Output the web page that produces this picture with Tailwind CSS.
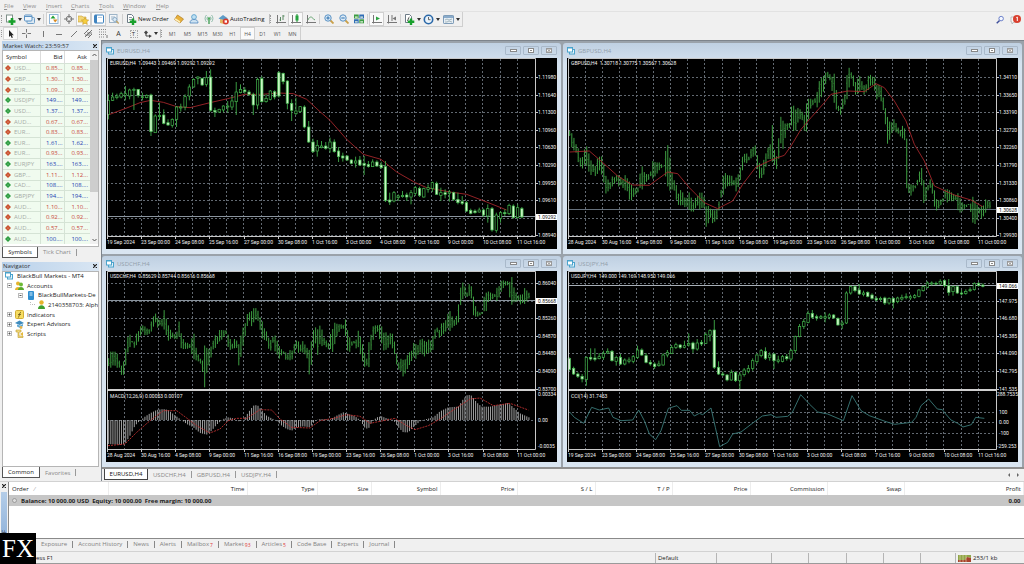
<!DOCTYPE html>
<html lang="en">
<head>
<meta charset="utf-8">
<title>MetaTrader 4</title>
<script src="https://cdn.jsdelivr.net/npm/@tailwindcss/browser@4"></script>
</head>
<body class="relative flex h-screen flex-col overflow-hidden bg-[#f0f0f0] font-['Open_Sans','Noto_Sans',sans-serif] text-[6px] leading-[8px] text-[#222]">

<nav aria-label="Menu" class="flex h-[12px] shrink-0 items-center border-b border-[#e2e2e2] pl-[4px] text-[#8f8f8f]">
  <button class="w-[19px] text-left"><u>F</u>ile</button>
  <button class="w-[23px] text-left"><u>V</u>iew</button>
  <button class="w-[25px] text-left"><u>I</u>nsert</button>
  <button class="w-[28px] text-left"><u>C</u>harts</button>
  <button class="w-[24px] text-left"><u>T</u>ools</button>
  <button class="w-[33px] text-left"><u>W</u>indow</button>
  <button class="text-left"><u>H</u>elp</button>
</nav>

<div role="toolbar" aria-label="Standard" class="flex h-[15px] shrink-0 items-stretch">
  <div class="flex items-stretch border-r border-b border-[#cfcfcf] pl-px">
    <span class="my-[3px] mr-px w-[2px] border-l border-dotted border-[#999]"></span>
    <button aria-label="New chart" class="flex w-[19px] items-center gap-[2px] pl-px"><svg class="size-[11px]" viewBox="0 0 11 11"><rect x="1.500" y="1" width="6" height="7" fill="#fff" stroke="#7d8f88"/><path d="M7 4v7M3.500 7.500h7" stroke="#18a02c" stroke-width="2.600"/></svg><svg class="w-[4px]" viewBox="0 0 4 3"><path d="M0 0h4L2 3z" fill="#333"/></svg></button>
    <button aria-label="Profiles" class="flex w-[20px] items-center gap-[2px] pl-px"><svg class="size-[11px]" viewBox="0 0 11 11"><rect x="3" y="3.500" width="7.500" height="6" rx="1" fill="#dbe8f3" stroke="#6f9fc8"/><rect x=".5" y="1" width="7.500" height="6" rx="1" fill="#eef5fb" stroke="#5d93c4"/><path d="M1 2.500h7" stroke="#5d93c4"/></svg><svg class="w-[4px]" viewBox="0 0 4 3"><path d="M0 0h4L2 3z" fill="#333"/></svg></button>
    <span class="my-[2px] mr-[2px] w-px bg-[#cfcfcf]"></span>
    <button aria-label="Market Watch" aria-pressed="true" class="flex w-[15px] items-center justify-center border border-[#d0d0d0] bg-[#fafafa]"><svg class="size-[10px]" viewBox="0 0 10 10"><rect x=".5" y=".5" width="8.500" height="9" fill="#fdfdfd" stroke="#8fb5d6"/><path d="M1.500 4.500L4 1.500l2.500 3z" fill="#22a033"/><path d="M4 5.500h4.500L6.200 8.500z" fill="#d98a20"/></svg></button>
    <button aria-label="Data Window" class="flex w-[15px] items-center justify-center"><svg class="size-[10px]" viewBox="0 0 10 10"><circle cx="5" cy="5" r="2.800" fill="none" stroke="#777"/><path d="M5 0v4M5 6v4M0 5h4M6 5h4" stroke="#777"/></svg></button>
    <button aria-label="Navigator" aria-pressed="true" class="flex w-[15px] items-center justify-center border border-[#d0d0d0] bg-[#fafafa]"><svg class="size-[11px]" viewBox="0 0 11 11"><path d="M0 2h4l1 1h3v5H0z" fill="#f3d676" stroke="#c9a13a" stroke-width=".6"/><path d="M7 3.500l1.200 2.300 2.500.3-1.900 1.700.5 2.600L7 9.200l-2.300 1.200.5-2.600-1.900-1.700 2.500-.3z" fill="#f7cf3d" stroke="#c6992b" stroke-width=".6"/></svg></button>
    <button aria-label="Terminal" aria-pressed="true" class="flex w-[15px] items-center justify-center border border-[#d0d0d0] bg-[#fafafa]"><svg class="size-[10px]" viewBox="0 0 10 10"><rect x=".5" y="1" width="9" height="8" rx=".6" fill="#fff" stroke="#3f83bf"/><path d="M2 1v8" stroke="#3f83bf" stroke-width="2"/><path d="M4 3.500h4" stroke="#b9cfe2"/></svg></button>
    <button aria-label="Strategy Tester" class="flex w-[15px] items-center justify-center"><svg class="size-[10px]" viewBox="0 0 10 10"><rect x=".5" y=".5" width="7.500" height="8" fill="#f3f6f9" stroke="#9eb4c7"/><path d="M2 3h4M2 5h2" stroke="#9eb4c7"/><circle cx="5.800" cy="5.500" r="2" fill="#dcebf6" stroke="#8aa9c4"/><path d="M7.300 7l2.400 2.500" stroke="#c0a265" stroke-width="1.300"/></svg></button>
    <span class="my-[2px] mx-px w-px bg-[#cfcfcf]"></span>
    <button class="flex w-[47px] items-center gap-px pl-[2px] text-[#111]"><svg class="size-[11px] shrink-0" viewBox="0 0 11 11"><path d="M1.500.5h4l2 2v6h-6z" fill="#fff" stroke="#6d7b86"/><path d="M3 3.500h3M3 5.500h3" stroke="#8d9aa4"/><path d="M7 4.500V11M3.800 7.700h6.500" stroke="#18a02c" stroke-width="2.400"/></svg><span class="whitespace-nowrap">New Order</span></button>
    <button aria-label="MetaEditor" class="flex w-[15px] items-center justify-center"><svg class="size-[10px]" viewBox="0 0 10 10"><path d="M3.500 1l6 4L6 9 .5 5.500z" fill="#e8b13c" stroke="#b07b1c" stroke-width=".7"/><path d="M.5 5.500L6 9l.2-1.800L1.500 4.300z" fill="#fff0bd"/></svg></button>
    <button aria-label="Community" class="flex w-[15px] items-center justify-center"><svg class="size-[10px]" viewBox="0 0 10 10"><circle cx="5" cy="3" r="2.400" fill="#bfe0f3" stroke="#4e9ac9" stroke-width=".8"/><path d="M1 9c0-2.500 1.500-3.500 4-3.500S9 6.500 9 9z" fill="#cfe4f3" stroke="#4e87bd" stroke-width=".8"/></svg></button>
    <button aria-label="Signals" class="flex w-[15px] items-center justify-center"><svg class="size-[10px]" viewBox="0 0 10 10"><g fill="none" stroke="#83b6a2" stroke-width=".9"><path d="M2.500 1a5 5 0 000 7M7.500 1a5 5 0 010 7"/><path d="M3.600 2.700a3 3 0 000 3.600M6.400 2.700a3 3 0 010 3.600"/></g><circle cx="5" cy="4.500" r="1.300" fill="#4fa95f"/><path d="M5 5.500V10" stroke="#3a9a4c" stroke-width="1.300"/></svg></button>
    <button class="flex w-[50px] items-center gap-px pl-[2px] text-[#111]"><svg class="size-[11px] shrink-0" viewBox="0 0 11 11"><path d="M.5 4.500L5 1l5 3.500-4.500 2z" fill="#5e9cc7"/><path d="M2 5v4l4 1V6z" fill="#e5b765"/><circle cx="7.800" cy="7.500" r="3" fill="#d8392b"/><rect x="6.600" y="6.300" width="2.400" height="2.400" fill="#fff"/></svg><span>AutoTrading</span></button>
    <span class="my-[2px] ml-[3px] w-px bg-[#bdbdbd]"></span>
    <span class="my-[3px] mr-px w-[2px] border-l border-dotted border-[#999]"></span>
    <button aria-label="Bar chart" class="flex w-[15px] items-center justify-center"><svg class="size-[10px]" viewBox="0 0 10 10" fill="none"><path d="M1.500 1v8.500M0 8.500h10" stroke="#777"/><path d="M4.500 3v4M3.500 6h1M7 1v5M7 2h1.500" stroke="#5b8a63"/></svg></button>
    <button aria-label="Candlesticks" aria-pressed="true" class="flex w-[15px] items-center justify-center border border-[#d0d0d0] bg-[#fafafa]"><svg class="size-[10px]" viewBox="0 0 10 10"><path d="M1.500 1v8.500M0 8.500h10" stroke="#777"/><path d="M6 0v8" stroke="#1d8c33"/><rect x="4.500" y="1.500" width="3" height="5" fill="#26a33e"/></svg></button>
    <button aria-label="Line chart" class="flex w-[15px] items-center justify-center"><svg class="size-[10px]" viewBox="0 0 10 10" fill="none"><path d="M1.500 1v8.500M0 8.500h10" stroke="#777"/><path d="M2 6c1-3 3-3.500 4-2.500S8 5.500 9 6" stroke="#67a572"/></svg></button>
    <span class="my-[2px] mx-px w-px bg-[#cfcfcf]"></span>
    <button aria-label="Zoom in" class="flex w-[15px] items-center justify-center"><svg class="size-[10px]" viewBox="0 0 10 10"><path d="M6 6l3.500 3.500" stroke="#c9a04a" stroke-width="1.800"/><circle cx="4" cy="4" r="3.200" fill="#dcebf8" stroke="#5a92c4"/><path d="M4 2.300v3.400M2.300 4h3.400" stroke="#2d70ad"/></svg></button>
    <button aria-label="Zoom out" class="flex w-[15px] items-center justify-center"><svg class="size-[10px]" viewBox="0 0 10 10"><path d="M6 6l3.500 3.500" stroke="#c9a04a" stroke-width="1.800"/><circle cx="4" cy="4" r="3.200" fill="#dcebf8" stroke="#5a92c4"/><path d="M2.300 4h3.400" stroke="#2d70ad"/></svg></button>
    <button aria-label="Tile windows" class="flex w-[15px] items-center justify-center"><svg class="size-[10px]" viewBox="0 0 10 10"><path d="M0 .5h4.700v4H0z" fill="#3c9d43"/><path d="M5.300.5H10v4H5.300zM0 5.300h4.700v4H0z" fill="#2f6db5"/><path d="M5.300 5.300H10v4H5.300z" fill="#3c9d43"/><path d="M1 2.500h2.700v1.300H1zM6.300 2.500H9v1.300H6.300zM1 7.200h2.700v1.300H1zM6.300 7.200H9v1.300H6.300z" fill="#e9f3e2"/></svg></button>
    <span class="my-[2px] mx-px w-px bg-[#cfcfcf]"></span>
    <button aria-label="Auto scroll" aria-pressed="true" class="flex w-[15px] items-center justify-center border border-[#d0d0d0] bg-[#fafafa]"><svg class="size-[10px]" viewBox="0 0 10 10"><path d="M1.500 1v8.500M0 8.500h10" stroke="#777"/><path d="M4 2.500v4L8 4.500z" fill="#2ba340"/></svg></button>
    <button aria-label="Chart shift" class="flex w-[15px] items-center justify-center"><svg class="size-[10px]" viewBox="0 0 10 10"><path d="M1.500 1v8.500M0 8.500h10M5 1v6" stroke="#777"/><path d="M9 2.500v4L5.500 4.500z" fill="#777"/></svg></button>
    <span class="my-[2px] mx-px w-px bg-[#cfcfcf]"></span>
    <button aria-label="Indicators" class="flex w-[20px] items-center gap-[2px] pl-[2px]"><svg class="size-[11px]" viewBox="0 0 11 11"><path d="M1.500.5h4l2 2v6h-6z" fill="#fff" stroke="#6d7b86"/><path d="M3 7c1.500 0 1-4 2.500-4" fill="none" stroke="#555"/><path d="M7 4.500V11M3.800 7.700h6.500" stroke="#18a02c" stroke-width="2.400"/></svg><svg class="w-[4px]" viewBox="0 0 4 3"><path d="M0 0h4L2 3z" fill="#333"/></svg></button>
    <button aria-label="Periods" class="flex w-[20px] items-center gap-[2px] pl-px"><svg class="size-[11px]" viewBox="0 0 11 11"><circle cx="5.500" cy="5.500" r="4.200" fill="#eaf3fb" stroke="#2a68a8" stroke-width="1.600"/><path d="M5.500 3v2.700h2" fill="none" stroke="#444" stroke-width=".8"/></svg><svg class="w-[4px]" viewBox="0 0 4 3"><path d="M0 0h4L2 3z" fill="#333"/></svg></button>
    <button aria-label="Templates" class="flex w-[20px] items-center gap-[2px] pl-px"><svg class="size-[11px]" viewBox="0 0 11 11"><rect x=".5" y="1.500" width="10" height="8" rx=".6" fill="#e6eef5" stroke="#7e9cb8"/><path d="M.5 3h10" stroke="#6b94bb" stroke-width="1.500"/><path d="M2 6l2-1 2 1 3-1M2 8h2l2-1 3 1" fill="none" stroke="#8aa0a8" stroke-width=".7"/></svg><svg class="w-[4px]" viewBox="0 0 4 3"><path d="M0 0h4L2 3z" fill="#333"/></svg></button>
  </div>
  <div class="ml-auto flex items-center gap-[5px] pr-[3px]">
    <button aria-label="Search"><svg class="size-[9px]" viewBox="0 0 10 10"><path d="M4 6L.8 9.300" stroke="#3e4e9a" stroke-width="1.600"/><circle cx="5.700" cy="4" r="2.500" fill="#f3f7ff" stroke="#5d74c4"/></svg></button>
    <button aria-label="Notifications"><svg class="size-[11px]" viewBox="0 0 11 11"><path d="M1 3h6v5H4L2 10V8H1z" fill="#f7f7f7" stroke="#aaa" stroke-width=".7"/><circle cx="7" cy="5" r="4" fill="#d9402f"/><path d="M6.300 3.500L7.300 3v4" fill="none" stroke="#fff"/></svg></button>
  </div>
</div>

<div role="toolbar" aria-label="Line studies and periods" class="flex h-[13px] shrink-0 items-stretch">
  <div class="flex items-stretch border-r border-[#cfcfcf] pl-px text-[5px] text-[#555]">
    <span class="my-[3px] w-[2px] border-l border-dotted border-[#999]"></span>
    <button aria-label="Cursor" aria-pressed="true" class="flex w-[15px] items-center justify-center border border-[#d8d8d8] bg-[#fafafa]"><svg class="size-[8px]" viewBox="0 0 8 8"><path d="M2 0v7l1.600-1.400L4.700 8l1.200-.6-1.100-2.200h2z" fill="#222"/></svg></button>
    <button aria-label="Crosshair" class="flex w-[16px] items-center justify-center"><svg class="size-[9px]" viewBox="0 0 9 9"><path d="M4.500 0v3.500M4.500 5.500V9M0 4.500h3.500M5.500 4.500H9" stroke="#777"/></svg></button>
    <button aria-label="Vertical line" class="ml-px flex w-[16px] items-center justify-center"><svg class="size-[8px]" viewBox="0 0 8 8"><path d="M4.500 1v6" stroke="#777"/></svg></button>
    <button aria-label="Horizontal line" class="flex w-[15px] items-center justify-center"><svg class="size-[8px]" viewBox="0 0 8 8"><path d="M1 4.500h6" stroke="#777"/></svg></button>
    <button aria-label="Trendline" class="flex w-[15px] items-center justify-center"><svg class="size-[8px]" viewBox="0 0 8 8"><path d="M1 7l6-6" stroke="#777"/></svg></button>
    <button aria-label="Equidistant channel" class="flex w-[15px] items-center justify-center"><svg class="size-[9px]" viewBox="0 0 9 9"><path d="M0 5l5-5M1 8l7-7M4 9l4-4M1 6h5M3 4h5" stroke="#555" stroke-width=".8"/></svg></button>
    <button aria-label="Fibonacci" class="flex w-[15px] items-center justify-center"><svg class="size-[9px]" viewBox="0 0 9 9"><path d="M0 .5h8M0 3h8M0 5.500h8M0 8h6" stroke="#888" stroke-dasharray="1 1"/><path d="M8 6v3" stroke="#777"/></svg></button>
    <button aria-label="Text" class="w-[15px] text-center text-[7px] text-[#333]">A</button>
    <button aria-label="Text label" class="flex w-[15px] items-center justify-center"><span class="flex size-[8px] items-center justify-center border border-dotted border-[#aaa] text-[6px] text-[#333]">T</span></button>
    <button aria-label="Arrows" class="flex w-[17px] items-center gap-[2px] pl-[3px]"><svg class="size-[8px]" viewBox="0 0 8 8"><path d="M0 2.500L2 .5l2 2-2 2z" fill="#444"/><path d="M2 3v3h4" fill="none" stroke="#444"/><path d="M5 4.500L7.800 6 5 8z" fill="#444"/></svg><svg class="w-[4px]" viewBox="0 0 4 3"><path d="M0 0h4L2 3z" fill="#333"/></svg></button>
    <span class="my-[2px] ml-[2px] w-px bg-[#bdbdbd]"></span>
    <span class="my-[3px] mr-[2px] w-[2px] border-l border-dotted border-[#999]"></span>
    <button class="w-[15px]">M1</button><button class="w-[15px]">M5</button><button class="w-[15px]">M15</button><button class="w-[15px]">M30</button><button class="w-[15px]">H1</button><button aria-pressed="true" class="w-[15px] border border-[#d0d0d0] bg-[#fafafa]">H4</button><button class="w-[15px]">D1</button><button class="w-[15px]">W1</button><button class="w-[15px]">MN</button>
  </div>
</div>

<div class="flex min-h-0 flex-1">
  <aside class="flex w-[99px] shrink-0 flex-col gap-[4px] pl-[2px] pt-px pb-[3px]">
    <section class="flex min-h-0 flex-1 flex-col" aria-label="Market Watch">
      <h2 class="flex h-[9px] shrink-0 items-center justify-between bg-linear-to-r from-[#b9d1ea] to-[#d9e6f3] pl-px pr-[2px] text-[#333]">Market Watch: 23:59:57<button aria-label="Close Market Watch"><svg class="size-[4px]" viewBox="0 0 4 4"><path d="M0 0l4 4M4 0L0 4" stroke="#222" stroke-width="1.200"/></svg></button></h2>
      <div class="flex min-h-0 flex-1 border border-[#b5b5b5] bg-white pb-[2px]">
        <table class="h-full flex-1 border-collapse bg-[#f0fbef]">
          <colgroup><col><col class="w-[24px]"><col class="w-[26px]"></colgroup>
          <thead><tr class="h-[12px] bg-white"><th class="pl-[3px] text-left font-normal">Symbol</th><th class="border-l border-[#dcdcdc] pr-px text-right font-normal">Bid</th><th class="border-l border-[#dcdcdc] pr-[3px] text-right font-normal">Ask</th></tr></thead>
          <tbody id="quotes"></tbody>
        </table>
        <div class="flex w-[8px] shrink-0 flex-col items-center bg-[#f0f0f0] py-[2px]">
          <svg class="w-[5px]" viewBox="0 0 5 4"><path d="M.5 3L2.500 1l2 2" fill="none" stroke="#555"/></svg>
          <div class="mt-[3px] h-[132px] w-full bg-[#cdcdcd]"></div>
          <svg class="mt-auto w-[5px]" viewBox="0 0 5 4"><path d="M.5 1l2 2 2-2" fill="none" stroke="#555"/></svg>
        </div>
      </div>
      <div role="tablist" class="flex h-[11px] shrink-0 text-[#888]">
        <button role="tab" aria-selected="true" class="w-[36px] border border-t-0 border-[#555] bg-white text-[#222]">Symbols</button>
        <button role="tab" class="ml-[5px]">Tick Chart</button><span class="ml-[5px] my-[2px] w-px bg-[#999]"></span>
      </div>
    </section>
    <section class="flex min-h-0 flex-1 flex-col" aria-label="Navigator">
      <h2 class="flex h-[9px] shrink-0 items-center justify-between bg-linear-to-r from-[#b9d1ea] to-[#d9e6f3] pl-px pr-[2px] text-[#333]">Navigator<button aria-label="Close Navigator"><svg class="size-[4px]" viewBox="0 0 4 4"><path d="M0 0l4 4M4 0L0 4" stroke="#222" stroke-width="1.200"/></svg></button></h2>
      <div class="min-h-0 flex-1 overflow-hidden border border-[#b5b5b5] bg-white">
        <ul class="grid h-[67px] grid-rows-7 whitespace-nowrap">
          <li class="flex items-center gap-[4px] pl-[2px]"><svg class="size-[8px] shrink-0" viewBox="0 0 8 8"><rect x="2.500" y="2.500" width="5" height="4.500" fill="#e5f4fb" stroke="#4aa3cc"/><rect x=".5" y=".5" width="5" height="4.500" fill="#fff" stroke="#4aa3cc"/><path d="M.5 1h5" stroke="#4aa3cc"/></svg>BlackBull Markets - MT4</li>
          <li class="flex items-center gap-[3px] pl-[4px]"><svg class="size-[5px] shrink-0" viewBox="0 0 5 5"><rect x=".5" y=".5" width="4" height="4" fill="#fff" stroke="#bbb"/><path d="M1.500 2.500h2" stroke="#555"/></svg><svg class="size-[9px] shrink-0" viewBox="0 0 9 9"><circle cx="3" cy="2.500" r="2" fill="#e6b32c"/><path d="M0 9c0-4 6-4 6 0z" fill="#e6b32c"/><circle cx="6" cy="3.500" r="2" fill="#6cba35"/><path d="M3 9c0-4 6-4 6 0z" fill="#56a82c"/></svg>Accounts</li>
          <li class="flex items-center gap-[3px] pl-[15px]"><svg class="size-[5px] shrink-0" viewBox="0 0 5 5"><rect x=".5" y=".5" width="4" height="4" fill="#fff" stroke="#bbb"/><path d="M1.500 2.500h2" stroke="#555"/></svg><svg class="size-[9px] shrink-0" viewBox="0 0 9 9"><rect x="2" width="6" height="9" rx="1" fill="#2f8fd0"/><path d="M3.500 2h3M3.500 4h3" stroke="#d5ecfa"/></svg>BlackBullMarkets-De</li>
          <li class="flex items-center gap-[2px] pl-[27px]"><svg class="h-[5px] w-[5px] shrink-0" viewBox="0 0 5 5"><path d="M.5 0v2.500H5" fill="none" stroke="#bbb" stroke-dasharray="1 1"/></svg><svg class="size-[9px] shrink-0" viewBox="0 0 9 9"><circle cx="4.500" cy="2.500" r="2.200" fill="#e6b32c"/><path d="M1 9c0-5 7-5 7 0z" fill="#3f9f2e"/></svg>2140358703: Alph</li>
          <li class="flex items-center gap-[3px] pl-[4px]"><svg class="size-[5px] shrink-0" viewBox="0 0 5 5"><rect x=".5" y=".5" width="4" height="4" fill="#fff" stroke="#bbb"/><path d="M1.500 2.500h2M2.500 1.500v2" stroke="#555"/></svg><svg class="size-[9px] shrink-0" viewBox="0 0 9 9"><rect x=".5" y=".5" width="8" height="8" rx="1" fill="#f6dc62" stroke="#d2ae35"/><path d="M3 7.500c1.800 0 1-5.500 3-5.500M3 4.500h3" fill="none" stroke="#6b5415" stroke-width=".8"/></svg>Indicators</li>
          <li class="flex items-center gap-[3px] pl-[4px]"><svg class="size-[5px] shrink-0" viewBox="0 0 5 5"><rect x=".5" y=".5" width="4" height="4" fill="#fff" stroke="#bbb"/><path d="M1.500 2.500h2M2.500 1.500v2" stroke="#555"/></svg><svg class="size-[9px] shrink-0" viewBox="0 0 9 9"><path d="M0 3l4.500-2.500L9 3 4.500 5z" fill="#3e8bbd"/><path d="M2 4.500v2l3 1.500 3-2V4L5 5.500z" fill="#61a9d5"/><circle cx="6" cy="7.500" r="1.400" fill="#e6b34a"/></svg>Expert Advisors</li>
          <li class="flex items-center gap-[3px] pl-[4px]"><svg class="size-[5px] shrink-0" viewBox="0 0 5 5"><rect x=".5" y=".5" width="4" height="4" fill="#fff" stroke="#bbb"/><path d="M1.500 2.500h2M2.500 1.500v2" stroke="#555"/></svg><svg class="size-[9px] shrink-0" viewBox="0 0 9 9"><path d="M1 1h5v2H4v4h4v1.500H3V3H1z" fill="#f4dd7e" stroke="#bf9a2b" stroke-width=".6"/><path d="M5 5l3-2v4z" fill="#e5b83a"/></svg>Scripts</li>
        </ul>
      </div>
      <div role="tablist" class="flex h-[11px] shrink-0 text-[#888]">
        <button role="tab" aria-selected="true" class="w-[38px] border border-t-0 border-[#555] bg-white text-[#222]">Common</button>
        <button role="tab" class="ml-[5px]">Favorites</button><span class="ml-[5px] my-[2px] w-px bg-[#999]"></span>
      </div>
    </section>
  </aside>

  <main class="ml-[2px] flex min-w-0 flex-1 flex-col border-t border-l border-[#7d848c]">
    <div id="desk" class="grid min-h-0 flex-1 grid-cols-2 grid-rows-2 gap-[2px] border-b-2 border-[#8f8f8f] bg-[#9aa2aa] pt-[2px] pr-[2px]"></div>
    <div role="tablist" aria-label="Charts" class="flex h-[12px] shrink-0 items-stretch pl-[2px] pb-px text-[#888]">
      <button role="tab" aria-selected="true" class="w-[44px] border border-t-0 border-[#444] bg-white text-[#111]">EURUSD,H4</button>
      <button role="tab" class="ml-[5px]">USDCHF,H4</button><span class="mx-[5px] my-[2px] w-px bg-[#999]"></span>
      <button role="tab">GBPUSD,H4</button><span class="mx-[5px] my-[2px] w-px bg-[#999]"></span>
      <button role="tab">USDJPY,H4</button><span class="mx-[5px] my-[2px] w-px bg-[#999]"></span>
      <div class="ml-auto flex items-center gap-[7px] pr-[5px]">
        <button aria-label="Scroll left"><svg class="h-[4px] w-[2px]" viewBox="0 0 2 4"><path d="M2 0v4L0 2z" fill="#666"/></svg></button>
        <button aria-label="Scroll right"><svg class="h-[4px] w-[2px]" viewBox="0 0 2 4"><path d="M0 0v4l2-2z" fill="#666"/></svg></button>
      </div>
    </div>
  </main>
</div>

<section aria-label="Terminal" class="flex h-[58px] shrink-0 border-t border-[#d2d2d2]">
  <div class="flex w-[8px] shrink-0 flex-col items-center gap-[4px] overflow-hidden pt-[2px]">
    <button aria-label="Close Terminal"><svg class="block size-[4px]" viewBox="0 0 4 4"><path d="M0 0l4 4M4 0L0 4" stroke="#222" stroke-width="1.200"/></svg></button>
    <span class="flex w-[6px] flex-1 rotate-180 items-center bg-linear-to-t from-[#b4cde8] to-[#8fb2da] pt-[6px] leading-[6px] [writing-mode:vertical-rl]">F</span>
  </div>
  <div class="min-w-0 flex-1 border-b border-l border-[#8a8a8a] bg-white">
    <table class="w-full table-fixed border-collapse">
      <colgroup><col class="w-[99px]"><col class="w-[139px]"><col class="w-[70px]"><col class="w-[54px]"><col class="w-[69px]"><col class="w-[77px]"><col class="w-[78px]"><col class="w-[77px]"><col class="w-[78px]"><col class="w-[77px]"><col class="w-[77px]"><col></colgroup>
      <thead><tr class="h-[13px] text-right *:border-r *:border-[#ededed] *:pr-[2px] *:font-normal">
        <th class="pl-[3px] text-left">Order <span class="pl-[4px] text-[#999]">⁄</span></th><th>Time</th><th>Type</th><th>Size</th><th>Symbol</th><th>Price</th><th>S / L</th><th>T / P</th><th>Price</th><th>Commission</th><th>Swap</th><th>Profit</th></tr></thead>
      <tbody><tr class="h-[11px] bg-[#c6c6c6] font-bold">
        <td colspan="11" class="py-0 pl-[3px]"><div class="flex items-center gap-[4px] whitespace-pre"><svg class="size-[5px]" viewBox="0 0 5 5"><circle cx="2.500" cy="2.500" r="2" fill="#ddd" stroke="#888" stroke-width=".7"/></svg>Balance: 10 000.00 USD  Equity: 10 000.00  Free margin: 10 000.00</div></td>
        <td class="py-0 pr-[3px] text-right">0.00</td></tr></tbody>
    </table>
  </div>
</section>
<div role="tablist" aria-label="Terminal tabs" class="flex h-[13px] shrink-0 items-center border-b border-[#d2d2d2] pb-[2px] pl-[41px] text-[#808080]">
  <button role="tab">Exposure</button><span class="mx-[5px] h-[7px] w-px bg-[#888]"></span>
  <button role="tab">Account History</button><span class="mx-[5px] h-[7px] w-px bg-[#888]"></span>
  <button role="tab">News</button><span class="mx-[5px] h-[7px] w-px bg-[#888]"></span>
  <button role="tab">Alerts</button><span class="mx-[5px] h-[7px] w-px bg-[#888]"></span>
  <button role="tab">Mailbox<sub class="pl-px text-[5px] text-[#d33]">7</sub></button><span class="mx-[5px] h-[7px] w-px bg-[#888]"></span>
  <button role="tab">Market<sub class="pl-px text-[5px] text-[#d33]">93</sub></button><span class="mx-[5px] h-[7px] w-px bg-[#888]"></span>
  <button role="tab">Articles<sub class="pl-px text-[5px] text-[#d33]">5</sub></button><span class="mx-[5px] h-[7px] w-px bg-[#888]"></span>
  <button role="tab">Code Base</button><span class="mx-[5px] h-[7px] w-px bg-[#888]"></span>
  <button role="tab">Experts</button><span class="mx-[5px] h-[7px] w-px bg-[#888]"></span>
  <button role="tab">Journal</button><span class="mx-[5px] h-[7px] w-px bg-[#888]"></span>
</div>
<footer class="flex h-[12px] shrink-0 items-stretch border-b border-[#9a9a9a] pt-px leading-[11px]">
  <span class="min-w-0 flex-1 pl-[36px]">ess F1</span>
  <span class="w-[61px] border-l border-[#b5b5b5] pl-[2px]">Default</span>
  <span class="w-[55px] border-l border-[#b5b5b5]"></span>
  <span class="w-[37px] border-l border-[#b5b5b5]"></span>
  <span class="w-[38px] border-l border-[#b5b5b5]"></span>
  <span class="w-[37px] border-l border-[#b5b5b5]"></span>
  <span class="w-[37px] border-l border-[#b5b5b5]"></span>
  <span class="w-[35px] border-l border-[#b5b5b5]"></span>
  <span class="flex w-[69px] items-center gap-[2px] border-l border-[#b5b5b5] pl-[2px]"><svg class="h-[7px] w-[13px]" viewBox="0 0 13 7"><path d="M0 0h13v3L9 2 7 5H0z" fill="#8fa548"/><path d="M0 5h7l2-3 4 1v4H0z" fill="#a8402c"/><path d="M2 0v7M5 0v7M8 0v7" stroke="#e6dcb0" stroke-width=".6"/></svg>253/1 kb</span>
</footer>
<div class="absolute bottom-0 left-0 flex h-[31px] w-[36px] items-center justify-center bg-black font-['Liberation_Serif',serif] text-[25px] leading-[31px] text-white">FX</div>

<script>
// ---- Market Watch quotes: symbol, bid, ask, direction ----
const quotes = `USD...|0.85...|0.85...|d
GBP...|1.30...|1.30...|d
EUR...|1.09...|1.09...|d
USDJPY|149....|149....|u
USD...|1.37...|1.37...|u
AUD...|0.67...|0.67...|d
EUR...|0.83...|0.83...|d
EUR...|1.61...|1.62...|u
EUR...|0.93...|0.93...|d
EURJPY|163....|163....|u
GBP...|1.11...|1.12...|d
CAD...|108....|108....|u
GBPJPY|194....|194....|u
AUD...|1.10...|1.10...|d
AUD...|0.92...|0.92...|d
AUD...|0.57...|0.57...|d
AUD...|100....|100....|u`.split('\n').map(r => r.split('|'));
document.getElementById('quotes').innerHTML = quotes.map(([s, b, a, d]) => {
  const tone = d === 'd' ? 'text-[#c8483a]' : 'text-[#2340b0]';
  const fill = d === 'd' ? '#c9502e' : '#2c9c40';
  return `<tr class="border-t border-[#d5e3d5]"><td class="py-0 pl-[2px]"><div class="flex items-center gap-[3px] text-[#a5aaa5]"><svg class="size-[6px]" viewBox="0 0 6 6"><path d="M3 0l3 3-3 3-3-3z" fill="${fill}"/><circle cx="3" cy="3" r=".6" fill="#fff" opacity=".6"/></svg>${s}</div></td><td class="border-l border-[#d5e3d5] py-0 pr-px text-right ${tone}">${b}</td><td class="border-l border-[#d5e3d5] py-0 pr-[2px] text-right ${tone}">${a}</td></tr>`;
}).join('');

// ---- Chart windows ----
// Series are kept in units of a third of a pixel; X and Y bring them into the view box.
const X = v => +(v / 3 - 6).toFixed(2), Y = v => +(v / 3 - 17).toFixed(2);
const pairs = s => s.trim().split(/\s+/).map(p => p.split(',').map(Number));
const short = ['19 Sep 2024','23 Sep 00:00','24 Sep 08:00','25 Sep 16:00','27 Sep 00:00','30 Sep 08:00','1 Oct 16:00','3 Oct 00:00','4 Oct 08:00','7 Oct 16:00','9 Oct 00:00','10 Oct 08:00','11 Oct 16:00'];
const long = ['28 Aug 2024','30 Aug 16:00','4 Sep 08:00','9 Sep 00:00','11 Sep 16:00','16 Sep 08:00','19 Sep 00:00','23 Sep 16:00','26 Sep 08:00','1 Oct 00:00','3 Oct 16:00','8 Oct 08:00','11 Oct 00:00'];

// top, bottom, high, low, filled (1) or hollow (0)
const eur = `178,220,160,235,0 168,178,155,180,0 165,170,158,175,0 158,168,152,172,0 158,163,135,178,0 147,165,143,175,0 145,148,140,207,0 145,163,145,170,1 167,170,155,178,0 163,170,160,172,0 162,272,158,285,1 225,275,220,275,0 223,227,185,237,0 222,247,205,250,1 245,252,235,255,1 235,253,232,260,0 198,235,195,258,0 198,201,188,212,0 167,198,160,208,0 138,165,130,178,0 115,138,112,140,0 108,112,106,130,0 112,132,110,135,1 110,130,90,137,0 108,208,85,212,1 208,213,200,228,1 205,213,203,216,0 195,207,193,214,0 195,198,180,215,0 180,198,165,207,0 153,182,123,222,0 145,155,130,157,0 147,152,138,158,1 153,160,147,165,1 160,192,155,222,1 115,192,110,205,0 113,182,105,185,1 172,182,160,185,0 150,175,147,178,0 152,168,148,175,1 95,165,90,170,1 97,122,95,130,1 120,187,118,205,1 187,208,175,240,1 210,218,170,222,0 197,212,195,215,0 198,258,193,262,1 258,303,240,306,1 303,332,293,336,1 313,330,297,347,0 315,320,300,322,0 315,322,303,326,1 303,322,290,335,0 303,332,295,335,1 330,347,318,363,1 345,351,335,362,1 345,357,342,360,1 357,367,355,370,1 360,366,347,380,0 357,372,345,375,1 367,373,345,402,1 370,377,360,380,1 363,377,355,378,0 363,375,358,378,1 372,380,362,384,1 377,478,360,483,1 477,483,455,492,1 455,480,450,484,0 465,470,460,480,0 463,467,450,470,0 462,468,455,480,1 455,468,447,490,0 440,457,435,465,0 442,463,437,468,1 443,468,440,470,0 440,445,430,455,0 425,443,422,453,0 427,460,422,462,1 455,463,440,480,0 455,460,445,472,1 453,457,447,482,0 455,475,452,480,1 475,485,455,490,1 482,487,465,492,1 485,510,480,513,1 508,517,503,520,1 510,515,505,518,1 507,513,500,515,0 507,522,503,528,1 503,525,490,545,0 503,567,498,572,1 522,568,515,575,0 515,532,510,545,0 515,518,505,525,1 493,518,488,522,0 495,530,490,533,1 500,530,490,533,0 503,528,498,532,1`;
const jpy = `313,347,310,350,1 343,360,338,363,1 360,367,355,372,1 367,375,360,385,1 310,377,307,395,0 310,315,283,320,1 312,316,283,322,1 308,314,297,316,0 298,310,290,318,0 292,297,283,300,0 292,320,288,323,1 310,322,305,335,0 310,330,300,333,1 318,330,313,334,0 318,322,310,328,0 308,322,303,328,0 288,310,275,315,0 288,303,283,306,1 305,325,297,328,1 325,330,318,335,1 330,338,325,345,1 330,335,320,338,0 303,333,298,335,0 295,303,288,310,0 280,298,273,300,0 272,280,266,285,0 273,280,270,285,1 275,280,260,283,0 268,273,238,278,0 267,285,263,297,1 267,285,255,290,0 265,270,258,276,1 242,268,235,270,0 230,243,226,262,0 228,340,198,345,1 340,360,322,363,1 360,363,353,367,1 363,378,360,382,1 355,378,347,380,0 355,380,352,384,1 363,380,355,405,0 348,362,342,368,0 343,352,333,358,0 320,343,313,350,0 303,323,298,330,0 290,305,285,310,0 292,313,280,318,1 303,310,295,320,0 300,320,298,345,1 318,322,305,328,0 308,322,303,325,0 308,314,300,320,1 290,315,285,320,0 248,290,245,298,0 217,248,210,250,0 203,217,195,225,0 178,205,170,208,0 178,190,168,195,1 188,192,182,200,1 188,192,183,195,0 188,192,175,205,0 183,190,178,196,0 183,192,180,195,1 193,213,190,215,1 207,212,200,225,0 117,207,112,210,0 98,117,95,122,0 98,110,95,115,1 108,120,90,123,1 117,121,110,127,0 115,127,112,130,1 123,133,118,137,1 133,138,127,142,1 133,137,128,142,0 132,147,128,153,1 133,147,130,152,0 133,145,130,163,1 132,143,128,148,0 130,135,122,140,0 128,131,118,136,0 128,132,122,138,0 125,130,120,134,0 108,127,105,130,0 98,110,95,113,0 87,100,82,103,0 87,90,82,95,0 88,90,83,94,1 82,90,76,93,0 80,95,76,100,1 95,115,75,125,1 98,113,95,125,0 98,117,95,120,1 117,120,108,124,1 112,118,106,122,0 107,110,100,114,0 88,107,85,110,0 88,95,84,98,1 93,97,88,100,1`;
// x, high, low
const gbp = `26,280,295 35,285,320 45,310,335 52,320,370 58,345,385 70,335,365 78,320,375 88,355,410 100,370,400 112,360,395 118,350,385 125,350,420 133,400,450 145,415,445 160,415,435 170,400,430 180,405,430 190,410,450 200,420,460 210,430,475 220,440,465 232,430,460 243,380,440 252,400,425 265,395,420 275,370,405 285,370,400 295,365,390 308,370,385 316,305,405 323,330,450 335,410,450 345,425,465 355,460,495 362,455,490 375,480,510 385,450,500 395,475,515 405,480,505 420,450,495 430,465,500 437,495,575 445,510,540 460,510,540 470,500,535 480,440,480 490,400,440 500,405,435 512,400,440 525,420,445 535,400,430 545,345,390 555,330,360 565,340,352 575,325,350 583,315,350 590,345,400 600,375,410 610,365,400 618,330,370 628,310,345 635,240,360 640,320,370 650,345,395 655,275,340 661,220,310 668,250,320 675,245,270 685,240,265 694,195,260 704,210,265 712,200,240 722,205,235 732,215,290 740,180,245 750,175,200 760,175,195 770,140,190 780,120,170 790,105,150 797,88,125 808,95,110 815,100,160 822,110,200 830,195,220 838,200,215 845,170,200 855,145,185 861,80,170 868,95,120 878,105,130 885,125,165 895,90,155 905,140,155 915,135,150 924,95,145 932,100,130 938,100,150 945,140,170 955,135,165 963,140,190 970,190,230 978,205,300 983,250,300 992,250,275 1000,235,270 1010,255,290 1018,260,280 1032,270,300 1035,295,440 1042,300,460 1043,430,465 1058,425,445 1070,425,435 1080,375,425 1085,395,470 1092,440,490 1100,425,450 1108,425,445 1118,440,480 1125,475,505 1135,475,500 1145,465,490 1155,450,480 1165,450,475 1175,455,485 1185,455,485 1195,475,510 1205,490,510 1215,490,505 1228,480,500 1237,475,550 1245,490,550 1255,500,525 1262,490,525 1270,485,520 1280,485,505 1288,485,510`;
const chf = `24,330,350 32,300,335 42,295,330 50,292,345 60,320,350 70,335,360 76,300,345 80,265,305 88,235,290 95,258,275 105,255,275 115,240,265 124,215,245 135,215,235 145,220,240 155,210,235 165,178,215 172,190,215 182,195,210 192,177,230 200,205,255 208,225,250 220,235,250 228,235,265 236,205,255 245,250,280 255,265,285 265,262,290 275,265,290 281,240,310 290,295,320 300,310,330 307,320,360 313,262,400 320,290,355 330,290,325 338,265,300 345,240,275 355,240,262 365,235,260 378,230,250 388,245,285 398,262,285 410,265,290 418,275,335 425,230,290 433,205,260 445,185,210 455,175,210 463,160,200 472,160,195 480,180,235 490,225,250 500,235,260 510,260,305 518,240,275 528,260,290 538,280,315 548,290,305 560,290,310 575,300,322 585,265,300 592,255,290 602,265,290 612,275,300 620,285,315 631,290,370 636,240,300 645,205,260 653,235,310 662,215,270 672,250,270 685,260,290 695,245,295 703,210,270 713,210,240 725,205,230 737,205,240 745,245,305 755,262,280 765,255,275 775,240,275 785,265,315 793,295,345 802,315,345 808,245,330 815,230,270 825,220,245 835,215,240 843,208,255 852,230,290 862,255,290 872,240,280 880,240,275 888,285,325 895,315,350 905,325,362 915,320,355 925,295,340 933,285,330 943,275,315 953,280,300 963,250,295 972,255,320 980,255,290 990,272,295 1000,245,290 1008,215,245 1020,222,245 1035,210,240 1048,165,225 1058,185,215 1070,195,215 1078,140,210 1084,85,140 1092,85,120 1100,110,130 1112,95,130 1120,130,175 1130,170,187 1145,170,187 1155,125,180 1165,115,140 1180,115,140 1195,110,130 1205,80,110 1215,80,100 1225,75,105 1235,75,150 1243,110,145 1253,125,150 1265,115,140 1275,112,150 1285,120,140`;
const macd = `24,570 60,572 75,570 90,545 105,515 120,500 135,488 150,478 170,468 190,465 205,468 220,480 240,495 260,510 280,520 300,537 320,542 335,530 350,512 370,495 385,490 400,493 415,502 430,498 445,475 460,455 472,453 485,468 500,485 515,493 530,500 545,515 560,525 575,530 590,520 610,517 630,520 645,500 660,495 690,497 710,485 730,475 745,480 765,487 780,498 795,522 805,525 815,505 830,490 845,487 860,493 880,498 895,520 910,535 925,535 940,520 960,502 980,495 1000,490 1020,472 1045,460 1075,458 1090,435 1103,422 1115,425 1130,445 1145,458 1170,458 1200,452 1225,447 1240,460 1260,478 1287,490`;
const signal = `24,575 75,570 110,535 150,500 190,470 230,470 260,492 290,515 330,537 360,525 385,500 410,493 440,493 480,467 515,468 540,495 575,520 630,522 660,500 700,493 740,482 780,487 810,508 850,500 885,493 920,515 945,527 985,515 1020,495 1060,468 1110,435 1140,432 1180,455 1230,448 1285,468`;
const cci = `26,474 40,490 68,508 92,460 115,468 143,462 156,490 180,500 215,498 233,468 250,500 265,540 284,557 300,530 322,463 348,455 361,469 386,469 400,486 415,478 425,482 450,462 463,520 476,578 500,565 515,540 540,534 578,505 604,486 630,482 645,490 680,487 694,475 719,422 745,450 770,474 800,480 847,500 873,425 900,470 925,485 975,503 1001,511 1052,505 1065,490 1080,455 1103,435 1129,465 1144,467 1154,480 1170,498 1190,508 1206,519 1231,512 1244,490 1270,493`;
const eurMa = `24,222 75,203 120,185 152,178 190,184 230,197 270,200 330,185 383,173 434,160 485,160 537,156 580,158 620,175 660,212 690,238 740,295 790,340 843,355 890,393 946,425 980,440 1050,453 1100,460 1160,483 1220,507`;
const gbpMa = `26,333 85,330 120,360 170,405 215,432 265,433 320,393 350,398 385,440 430,485 470,503 515,480 545,430 585,378 640,353 670,343 690,315 720,265 750,230 790,185 810,160 860,150 910,152 945,128 970,140 1000,180 1035,240 1060,310 1090,360 1120,435 1180,462 1230,477 1265,497`;

const text = (x, y, s, fill = '#f2f2f2') => `<text x="${x}" y="${y}" fill="${fill}">${s}</text>`;
const poly = (s, stroke, extra = '') => `<polyline points="${pairs(s).map(([x, y]) => X(x) + ',' + Y(y)).join(' ')}" fill="none" stroke="${stroke}" ${extra}/>`;

function candles(s) {
  return pairs(s).map(([t, b, h, l, f], i) => {
    const x = X(25 + 12.79 * i);
    const body = Math.max(.8, (b - t) / 3);
    return `<path d="M${x} ${Y(h)}V${Y(l)}" stroke="#3fae4a" stroke-width=".9"/><rect x="${(x - 1.2).toFixed(2)}" y="${Y(t)}" width="2.400" height="${body.toFixed(2)}" fill="${f ? '#c9f7c4' : '#000'}" stroke="#43b54e" stroke-width=".7"/>`;
  }).join('');
}
// Value of a keyed series at x
function at(pts, x, k) {
  let i = 1;
  while (i < pts.length - 1 && pts[i][0] < x) i++;
  const a = pts[i - 1], b = pts[i], t = Math.min(1, Math.max(0, (x - a[0]) / (b[0] - a[0])));
  return a[k] + (b[k] - a[k]) * t;
}
function bars(s) {
  const pts = pairs(s);
  let d = '', ticks = '';
  for (let i = 0, x = 26; x < 1289; i++, x += 6.4) {
    const n = ((i * 7919) % 13) / 13 - .5, m = ((i * 104729) % 11) / 11 - .5;
    const h = Y(at(pts, x, 1) + n * 20), l = Y(at(pts, x, 2) + m * 20), px = X(x);
    d += `M${px} ${h}V${l}`;
    ticks += `M${(px - .9).toFixed(2)} ${((h * 2 + l) / 3).toFixed(2)}h.9M${px} ${((h + l * 2) / 3).toFixed(2)}h.9`;
  }
  return `<path d="${d}" stroke="#45b04a" stroke-width=".9" fill="none"/><path d="${ticks}" stroke="#2f8a35" stroke-width=".7" fill="none"/>`;
}
function histogram(s) {
  const pts = pairs(s);
  let d = '';
  for (let x = 26; x < 1289; x += 6.4) d += `M${X(x)} 149V${Y(at(pts, x, 1))}`;
  return `<path d="${d}" stroke="#b4b4b4" stroke-width=".9"/>`;
}

function chart(c) {
  const first = c.sub ? 12 : 19, count = c.sub ? 7 : 10;
  let g = '';
  for (let k = 0; k < 24; k++) g += `M${Math.round(19 + 17.07 * k) - .5} 1V178`;
  for (let k = 0; k < count; k++) g += `M1 ${Math.round(first + 17.6 * k) + .5}H429`;
  if (c.levels) c.levels.forEach(y => g += `M1 ${y}.5H429`);
  let o = `<path d="${g}" stroke="#626971" stroke-dasharray="2 2" fill="none"/>`;
  o += `<path d="M1 ${c.price}.5H429" stroke="${c.priceStroke}" fill="none"/>` + c.series;
  o += `<path d="M1.500 .5H429.500V178.500H1.500z" stroke="#c8c8c8" fill="none"/>`;
  if (c.sub) o += '<path d="M1 119H430" stroke="#d0d0d0" stroke-width="2"/>';
  c.prices.forEach((p, k) => { const y = Math.round(first + 17.6 * k); if (p) o += `<path d="M429 ${y}.5h3" stroke="#c8c8c8"/>` + text(432, y + 2, p); });
  o += `<rect x="430" y="${c.price - 2}" width="21" height="6" fill="#fff"/>` + text(432, c.price + 3, c.tag, '#111');
  c.times.forEach((t, k) => { const x = 1 + Math.round(34.14 * k); o += `<path d="M${x}.5 178v3" stroke="#c8c8c8"/>` + text(x, 186, t); });
  (c.subLabels || []).forEach(([y, t]) => o += text(t.length > 7 ? 430 : 432, y, t));
  o += text(4, 7, c.head);
  if (c.sub) o += text(4, 127, c.sub);
  return o;
}
const charts = [
  { name: 'EURUSD,H4', head: 'EURUSD,H4&#160; 1.09443 1.09469 1.09292 1.09292', times: short, price: 158, priceStroke: '#8a949e', tag: '1.09292',
    prices: ['1.11980','1.11640','1.11300','1.10960','1.10630','1.10290','1.09950','1.09610','','1.08940'], series: poly(eurMa, '#a3262a', 'stroke-width=".9"') + candles(eur) },
  { name: 'GBPUSD,H4', head: 'GBPUSD,H4&#160; 1.30718 1.30775 1.30567 1.30628', times: long, price: 151, priceStroke: '#66717d', tag: '1.30628',
    prices: ['1.34110','1.33650','1.33190','1.32720','1.32260','1.31790','1.31330','1.30860','1.30400','1.29930'], series: bars(gbp) + poly(gbpMa, '#a3262a', 'stroke-width=".9"') },
  { name: 'USDCHF,H4', head: 'USDCHF,H4&#160; 0.85629 0.85744 0.85616 0.85668', times: long, price: 29, priceStroke: '#8a949e', tag: '0.85668',
    prices: ['0.86040','','0.85260','0.84870','0.84480','0.84090','0.83700'], sub: 'MACD(12,26,9) 0.00053 0.00107', levels: [149],
    subLabels: [[125,'0.00334'],[151,'0.00'],[177,'-0.0035']], series: bars(chf) + histogram(macd) + poly(signal, '#c03030', 'stroke-width=".9" stroke-dasharray="2 1"') },
  { name: 'USDJPY,H4', head: 'USDJPY,H4&#160; 149.000 149.169 148.950 149.066', times: short, price: 14, priceStroke: '#a8b0b8', tag: '149.066',
    prices: ['','147.975','146.680','145.385','144.090','142.795','141.535'], sub: 'CCI(14) 31.7453', levels: [141, 151, 162],
    subLabels: [[125,'288.7535'],[143,'100'],[153,'0.00'],[164,'-100'],[177,'-259.253']], series: candles(jpy) + poly(cci, '#3b7b79', 'stroke-width=".9"') },
];
document.getElementById('desk').innerHTML = charts.map(c => `
<section aria-label="${c.name}" class="flex min-h-0 min-w-0 flex-col rounded-t-[3px] bg-linear-to-b from-[#bfd0e2] via-[#d5e2ef] via-10% to-[#d9e5f1] px-[4px] pb-[5px]">
  <header class="flex h-[15px] shrink-0 items-center gap-[3px] text-[#929eaa]">
    <svg class="size-[8px]" viewBox="0 0 8 8"><rect x="2.500" y="2.500" width="5" height="4.500" fill="#e5f4fb" stroke="#4aa3cc"/><rect x=".5" y=".5" width="5" height="4.500" fill="#fff" stroke="#4aa3cc"/><path d="M.5 1h5" stroke="#4aa3cc"/></svg>
    <span>${c.name}</span>
    <span class="ml-auto flex gap-[2px]">
      <button aria-label="Minimize" class="flex h-[9px] w-[16px] items-center justify-center rounded-[1px] border border-[#a9b9ca]"><svg class="h-[3px] w-[7px]" viewBox="0 0 7 3"><rect x=".5" y=".5" width="6" height="2" fill="#fff" stroke="#888"/></svg></button>
      <button aria-label="Maximize" class="flex h-[9px] w-[16px] items-center justify-center rounded-[1px] border border-[#a9b9ca]"><svg class="h-[5px] w-[6px]" viewBox="0 0 6 5"><rect x=".5" y=".5" width="5" height="4" fill="#fff" stroke="#888"/><path d="M2 2.500h2" stroke="#888"/></svg></button>
      <button aria-label="Close" class="flex h-[9px] w-[16px] items-center justify-center rounded-[1px] border border-[#a9b9ca]"><svg class="h-[5px] w-[6px]" viewBox="0 0 6 5"><rect x=".5" y=".5" width="5" height="4" fill="#fff" stroke="#999"/><path d="M1.500 1l3 3M4.500 1l-3 3" stroke="#888"/></svg></button>
    </span>
  </header>
  <div class="min-h-0 flex-1 bg-black"><svg role="img" aria-label="${c.name} price chart" class="block h-full w-full font-['Roboto','Liberation_Sans',sans-serif] text-[5px]" viewBox="0 0 451 190" preserveAspectRatio="xMinYMin meet">${chart(c)}</svg></div>
</section>`).join('');
</script>
</body>
</html>
